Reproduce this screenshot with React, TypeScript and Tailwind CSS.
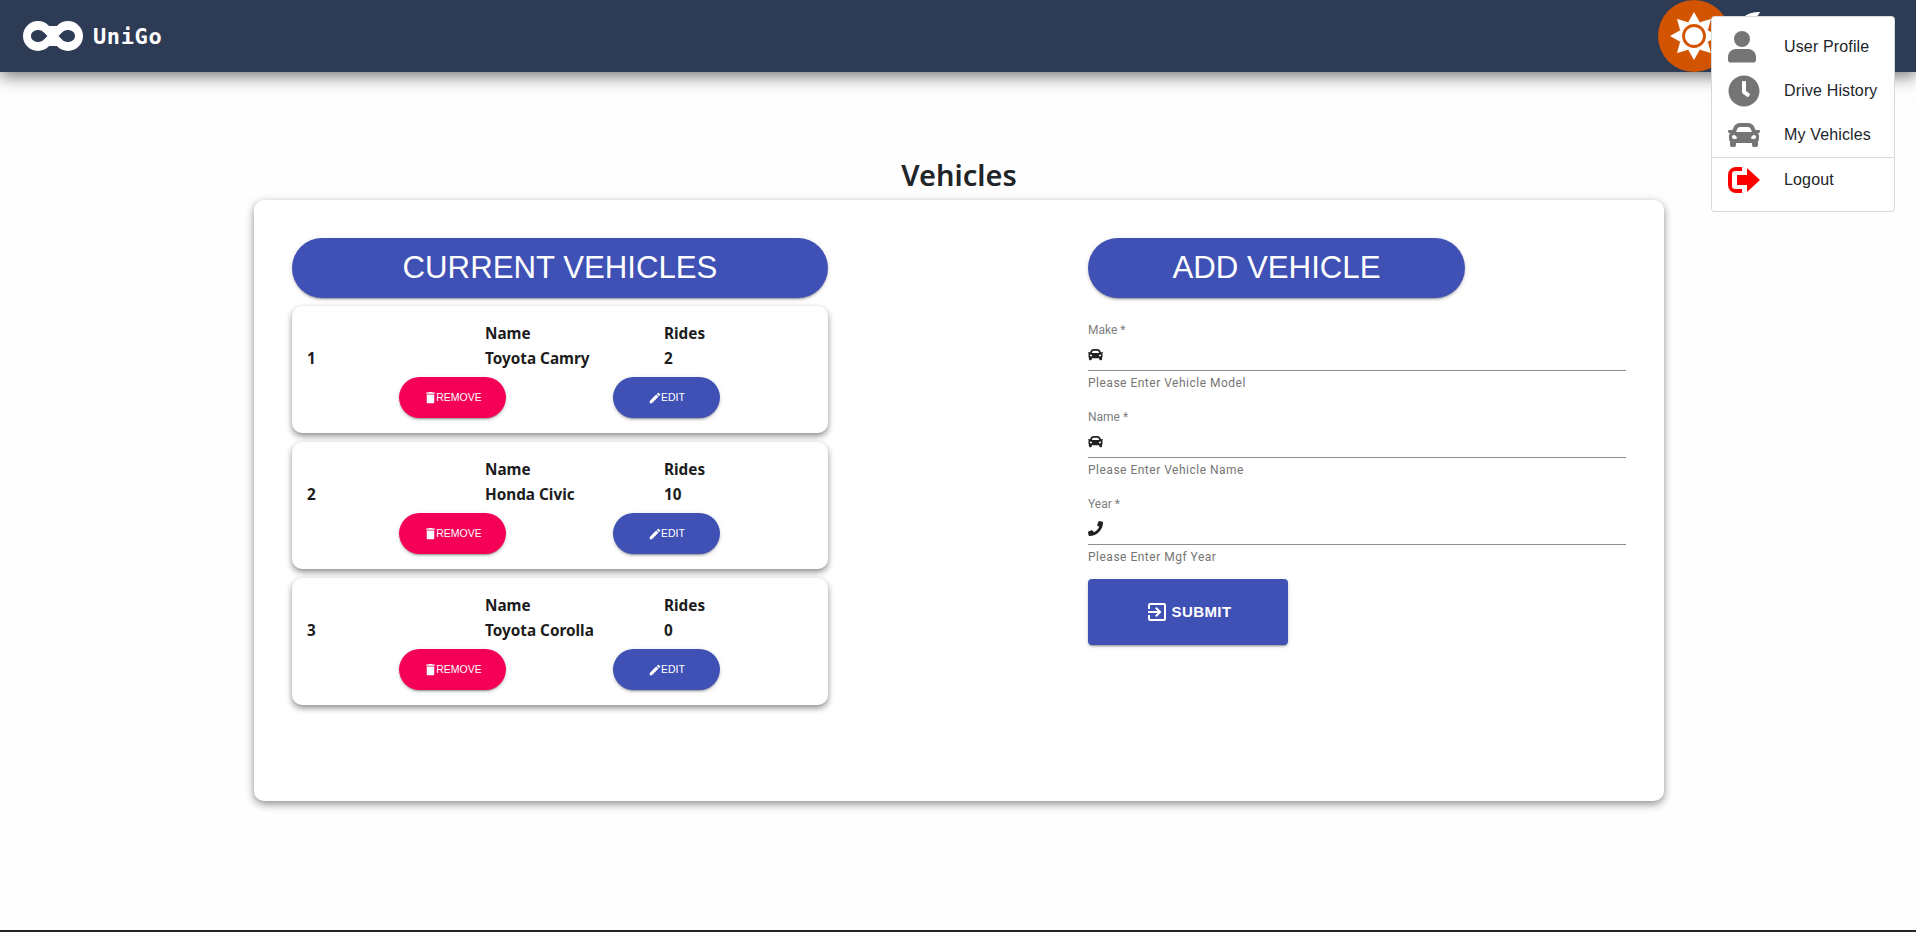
import { MdDelete, MdEdit, MdExitToApp } from "react-icons/md";
import { FaCar, FaClock, FaPhone } from "react-icons/fa";

const vehicles = [
  { id: 1, name: "Toyota Camry", rides: 2 },
  { id: 2, name: "Honda Civic", rides: 10 },
  { id: 3, name: "Toyota Corolla", rides: 0 },
];

const fields = [
  { label: "Make", helper: "Please Enter Vehicle Model", icon: "car" },
  { label: "Name", helper: "Please Enter Vehicle Name", icon: "car" },
  { label: "Year", helper: "Please Enter Mgf Year", icon: "phone" },
];

const muiShadow = "shadow-[0_3px_1px_-2px_rgba(0,0,0,.2),0_2px_2px_0_rgba(0,0,0,.14),0_1px_5px_0_rgba(0,0,0,.12)]";

function Sun() {
  const rays = [0, 45, 90, 135, 180, 225, 270, 315];
  return (
    <svg viewBox="0 0 48 48" className="w-[48px] h-[48px]">
      {rays.map((r) => (
        <polygon key={r} points="18.26,10.14 24,0 29.74,10.14" fill="#fff" transform={`rotate(${r} 24 24)`} />
      ))}
      <circle cx="24" cy="24" r="14.8" fill="#fff" />
      <circle cx="24" cy="24" r="10.5" fill="none" stroke="#d35400" strokeWidth="2.8" />
    </svg>
  );
}

function UserIcon() {
  return (
    <svg viewBox="0 0 32 32" className="w-[32px] h-[32px]" fill="#757575">
      <circle cx="14" cy="8" r="8" />
      <path d="M0 26c0-5 4-8 8-8h12c4 0 8 3 8 8v3c0 1.500-1 2.500-2 2.500H2c-1 0-2-1-2-2.500z" />
    </svg>
  );
}

function LogoutIcon() {
  return (
    <svg viewBox="0 0 32 26" className="w-[32px] h-[26px]" fill="#ff0000">
      <path d="M8 0h6v4H7a3 3 0 0 0-3 3v12a3 3 0 0 0 3 3h7v4H8a8 8 0 0 1-8-8V8a8 8 0 0 1 8-8z" />
      <path d="M9 8h10V1l13 12-13 12v-7H9z" />
    </svg>
  );
}

function Logo() {
  return (
    <svg viewBox="0 0 60 30" className="w-[60px] h-[30px]">
      <circle cx="15" cy="15" r="15" fill="#fff" />
      <circle cx="45" cy="15" r="15" fill="#fff" />
      <rect x="15" y="5" width="30" height="20" fill="#fff" />
      <path d="M8 15c0-3.500 3-6 7.500-6 3.500 0 6 3 9 6-3 3-5.500 6-9 6C11 21 8 18.500 8 15z" fill="#2d3b55" />
      <path d="M52 15c0-3.500-3-6-7.500-6-3.500 0-6 3-9 6 3 3 5.500 6 9 6 4.500 0 7.500-2.500 7.500-6z" fill="#2d3b55" />
    </svg>
  );
}

function Pill({ children, className }: { children: string; className: string }) {
  return (
    <div className={`h-[60px] rounded-full bg-[#3f51b5] text-white flex items-center justify-center text-[31.2px] font-['Liberation_Sans',sans-serif] ${muiShadow} ${className}`}>
      {children}
    </div>
  );
}

function VehicleCard({ id, name, rides }: { id: number; name: string; rides: number }) {
  return (
    <div className="h-[127px] bg-white rounded-[10px] shadow-[0_3px_6px_rgba(0,0,0,.45)] px-[15px] pt-[15px] font-['Noto_Sans',sans-serif] font-bold text-[15.3px] leading-[25px] text-[#1c1c1c]">
      <div className="grid grid-cols-[178px_179px_1fr]">
        <div />
        <div>Name</div>
        <div>Rides</div>
        <div>{id}</div>
        <div>{name}</div>
        <div>{rides}</div>
      </div>
      <div className="flex mt-[6px] ml-[92px] gap-[107px]">
        <button className={`w-[107px] h-[41px] rounded-full bg-[#f50057] text-white flex items-center justify-center text-[10.5px] font-normal font-['Liberation_Sans',sans-serif] ${muiShadow}`}>
          <MdDelete className="text-[15px] -mr-[2px]" />
          REMOVE
        </button>
        <button className={`w-[107px] h-[41px] rounded-full bg-[#3f51b5] text-white flex items-center justify-center text-[10.5px] font-normal font-['Liberation_Sans',sans-serif] ${muiShadow}`}>
          <MdEdit className="text-[14px] -mr-[1px]" />
          EDIT
        </button>
      </div>
    </div>
  );
}

function Field({ label, helper, icon }: { label: string; helper: string; icon: string }) {
  return (
    <div className="h-[87px] font-['Roboto',sans-serif]">
      <div className="text-[12px] leading-[14px] text-[#808080]">{label} *</div>
      <div className="h-[32px] mt-[2px] border-b border-[#8e8e8e] flex items-center text-[#212121] text-[15px]">
        {icon === "car" ? <FaCar /> : <FaPhone />}
      </div>
      <div className="text-[12px] leading-[14px] mt-[5px] text-[#757575] tracking-[.5px]">{helper}</div>
    </div>
  );
}

export default function App() {
  return (
    <div className="min-h-[932px] bg-[#fefefe] flex flex-col relative">
      <header className="h-[72px] bg-[#2d3b55] shadow-[0_4px_16px_rgba(0,0,0,.55)] flex items-center justify-between pl-[23px]">
        <div className="flex items-center gap-[10px]">
          <Logo />
          <span className="font-['DejaVu_Sans_Mono',monospace] font-bold text-[22px] tracking-[.6px] text-white">UniGo</span>
        </div>
        <div className="flex items-center pr-[156px]">
          <div className="w-[72px] h-[72px] rounded-full bg-[#d35400] flex items-center justify-center">
            <Sun />
          </div>
          <svg viewBox="0 0 16 5" className="w-[16px] h-[5px] ml-[14px] self-start mt-[12px]">
            <path d="M0 5C3 1.500 9 0 16 0c-1 2-2 4-4 5z" fill="#fff" />
          </svg>
        </div>
      </header>

      <div className="absolute left-[1711px] top-[16px] w-[184px] h-[196px] bg-white border border-[rgba(0,0,0,.15)] rounded-[4px] font-['Liberation_Sans',sans-serif] text-[16px] tracking-[.15px] text-[#212529]">
        <div className="pt-[8px]">
          <div className="h-[44px] flex items-center pl-[16px] gap-[24px]">
            <span className="w-[32px] flex justify-center"><UserIcon /></span>
            <span>User Profile</span>
          </div>
          <div className="h-[44px] flex items-center pl-[16px] gap-[24px]">
            <span className="w-[32px] flex justify-center"><FaClock className="text-[32px] text-[#757575]" /></span>
            <span>Drive History</span>
          </div>
          <div className="h-[44px] flex items-center pl-[16px] gap-[24px]">
            <span className="w-[32px] flex justify-center"><FaCar className="text-[32px] text-[#757575]" /></span>
            <span>My Vehicles</span>
          </div>
        </div>
        <div className="border-t border-[#dcdcdc]">
          <div className="h-[44px] flex items-center pl-[16px] gap-[24px]">
            <span className="w-[32px] flex justify-center"><LogoutIcon /></span>
            <span>Logout</span>
          </div>
        </div>
      </div>

      <main className="flex-1 flex flex-col items-center pl-[2px] pt-[82px]">
        <h1 className="h-[46px] font-['Noto_Sans',sans-serif] font-semibold text-[29px] leading-[42px] text-[#212529]">Vehicles</h1>
        <div className="w-[1410px] h-[601px] bg-white rounded-[10px] shadow-[0_3px_8px_rgba(0,0,0,.45)] pl-[38px] pt-[38px] flex">
          <div className="w-[536px] flex flex-col">
            <Pill className="w-full mb-[8px]">CURRENT VEHICLES</Pill>
            <div className="flex flex-col gap-[9px]">
              {vehicles.map((v) => (
                <VehicleCard key={v.id} {...v} />
              ))}
            </div>
          </div>
          <div className="ml-[260px] w-[538px]">
            <Pill className="w-[377px] mb-[25px]">ADD VEHICLE</Pill>
            {fields.map((f) => (
              <Field key={f.label} {...f} />
            ))}
            <button className={`w-[200px] h-[66px] -mt-[5px] rounded-[4px] bg-[#3f51b5] text-white flex items-center justify-center gap-[3px] font-['Liberation_Sans',sans-serif] font-bold text-[15px] tracking-[.4px] ${muiShadow}`}>
              <MdExitToApp className="text-[24px]" />
              SUBMIT
            </button>
          </div>
        </div>
      </main>
      <div className="h-[2px] bg-[#212529]" />
    </div>
  );
}
